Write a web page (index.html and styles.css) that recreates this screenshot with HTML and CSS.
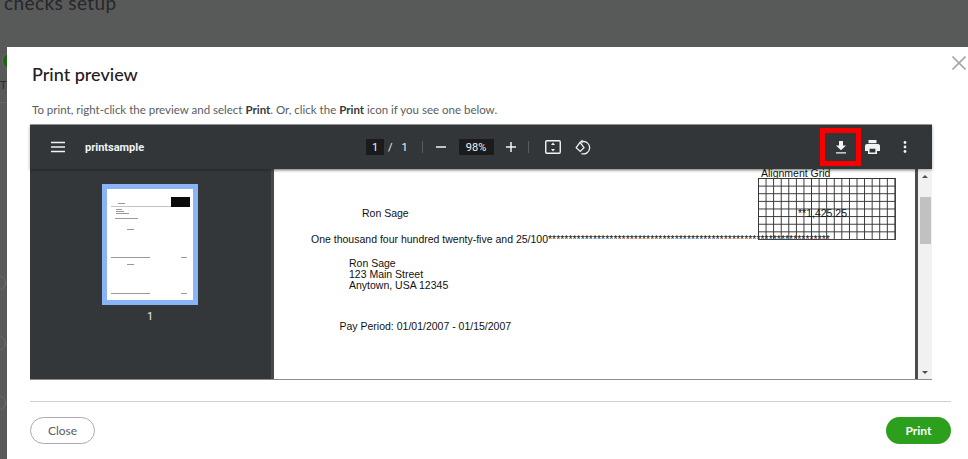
FILE: index.html
```html
<!DOCTYPE html>
<html lang="en">
<head>
<meta charset="utf-8">
<title>Print preview</title>
<link rel="stylesheet" href="styles.css">
</head>
<body>
<div class="backdrop">
  <h1 class="page-title">checks setup</h1>
  <div class="step-dot"></div>
  <div class="step-letter">T</div>
  <div class="page-rule"></div>
  <div class="ghost-pill"></div>
  <div class="ghost-pill"></div>
  <div class="ghost-pill"></div>
</div>

<section class="modal">
  <button class="modal-x" aria-label="Close">
    <svg width="14" height="14" viewBox="0 0 14 14"><path d="M.5 .5L13.500 13.500M13.500 .5L.5 13.500" stroke="#a6a6a6" stroke-width="1.6" fill="none"/></svg>
  </button>
  <h2 class="modal-title">Print preview</h2>
  <p class="modal-desc">To print, right-click the preview and select <b>Print</b>. Or, click the <b>Print</b> icon if you see one below.</p>

  <div class="viewer">
    <header class="toolbar">
      <div class="tb-left">
        <svg class="tb-menu" width="14" height="12" viewBox="0 0 14 12"><path d="M0 1.500H14M0 6H14M0 10.500H14" stroke="#f1f3f4" stroke-width="1.7"/></svg>
        <span class="doc-name">printsample</span>
      </div>
      <div class="tb-center">
        <span class="page-box">1</span>
        <span class="page-of">/</span>
        <span class="page-total">1</span>
        <span class="tb-sep"></span>
        <svg class="tb-minus" width="12" height="12" viewBox="0 0 12 12"><path d="M1 6H11" stroke="#f1f3f4" stroke-width="1.5"/></svg>
        <span class="zoom-box">98%</span>
        <svg class="tb-plus" width="12" height="12" viewBox="0 0 12 12"><path d="M1 6H11M6 1V11" stroke="#f1f3f4" stroke-width="1.5"/></svg>
        <span class="tb-sep tb-sep-2"></span>
        <svg class="tb-fit" width="16" height="14" viewBox="0 0 16 14"><rect x=".75" y=".75" width="14.500" height="12.500" rx="1.200" fill="none" stroke="#f1f3f4" stroke-width="1.400"/><path d="M8 2.600L10 5H6zM8 11.400L6 9h4z" fill="#f1f3f4"/></svg>
        <svg class="tb-rotate" width="16" height="16" viewBox="0 0 16 16"><path d="M5 3.400L1.200 8.600 5.200 12.400 9 8.600z" fill="none" stroke="#f1f3f4" stroke-width="1.300"/><path d="M7.400 2.600a6.200 6.200 0 1 1-.9 12" fill="none" stroke="#f1f3f4" stroke-width="1.300"/><path d="M7.600 .6V4.600L5 2.600z" fill="#f1f3f4"/></svg>
      </div>
      <div class="tb-right">
        <span class="dl-frame">
          <svg width="12" height="13" viewBox="0 0 12 13"><path d="M4 0H8V4.500H11L6 9.200 1 4.500H4zM1 11.200H11V12.600H1z" fill="#f1f3f4"/></svg>
        </span>
        <svg class="tb-print" width="15" height="14" viewBox="0 0 15 14"><path d="M3.500 0H11.500V3.200H3.500z" fill="#f1f3f4"/><path d="M2 4H13a2 2 0 0 1 2 2V11H12V14H3V11H0V6a2 2 0 0 1 2-2zM4.600 8.800V12.500H10.400V8.800z" fill="#f1f3f4" fill-rule="evenodd"/></svg>
        <svg class="tb-more" width="4" height="12" viewBox="0 0 4 12"><circle cx="2" cy="1.500" r="1.400" fill="#f1f3f4"/><circle cx="2" cy="6" r="1.400" fill="#f1f3f4"/><circle cx="2" cy="10.500" r="1.400" fill="#f1f3f4"/></svg>
      </div>
    </header>

    <div class="viewer-body">
      <aside class="thumbs">
        <div class="thumb">
          <div class="thumb-page">
            <span class="tl tl-a"></span>
            <span class="tl tl-b"></span>
            <span class="tl tl-c"></span>
            <span class="tl tl-d"></span>
            <span class="tl tl-e"></span>
            <span class="tl tl-f"></span>
            <span class="tl tl-g"></span>
            <span class="tl tl-h"></span>
            <span class="tl tl-i"></span>
            <span class="tl tl-j"></span>
            <span class="tl tl-k"></span>
            <span class="tl tl-l"></span>
            <span class="thumb-black"></span>
          </div>
        </div>
        <div class="thumb-num">1</div>
      </aside>
      <main class="doc">
        <div class="grid-label">Alignment Grid</div>
        <div class="grid"></div>
        <div class="amount">**1,425.25</div>
        <p class="doc-line payee">Ron Sage</p>
        <p class="doc-line words">One thousand four hundred twenty-five and 25/100*********************************************************************</p>
        <p class="doc-line address">Ron Sage<br>123 Main Street<br>Anytown, USA 12345</p>
        <p class="doc-line period">Pay Period: 01/01/2007 - 01/15/2007</p>
      </main>
      <div class="doc-edge"></div>
      <div class="scrollbar">
        <span class="arrow-up"></span>
        <span class="thumb-bar"></span>
        <span class="arrow-down"></span>
      </div>
    </div>
  </div>

  <footer class="modal-foot">
    <button class="btn btn-close">Close</button>
    <button class="btn btn-print">Print</button>
  </footer>
</section>
</body>
</html>
```
FILE: styles.css
```css
* { box-sizing: border-box; }
html, body { margin: 0; height: 100%; }
body {
  width: 968px;
  height: 459px;
  overflow: hidden;
  position: relative;
  background: #585959;
  font-family: "Lato", "Liberation Sans", sans-serif;
}

/* page dimmed behind the dialog */
.backdrop { height: 459px; overflow: hidden; color: #262729; }
.page-title {
  margin: -8px 0 0 4px;
  font: 400 19px/22px "Lato", sans-serif;
  letter-spacing: 0.4px;
  color: #262729;
}
.step-dot {
  width: 18px;
  height: 18px;
  margin: 38px 0 0 2px;
  border-radius: 50%;
  background: #1c6412;
  border: 1px solid #6a6b6b;
}
.step-letter { margin: 8px 0 0 0; font-size: 11px; line-height: 13px; color: #2c2d2e; }
.page-rule { height: 1px; margin-top: 11px; background: #646566; }
.ghost-pill {
  width: 16px;
  height: 16px;
  margin: 0 0 44px -10px;
  border: 1px solid #6c6d6d;
  border-radius: 50%;
}
.page-rule + .ghost-pill { margin-top: 172px; }

/* dialog */
.modal {
  position: absolute;
  left: 7px;
  top: 47px;
  width: 961px;
  height: 412px;
  padding: 16px 36px 0 25px;
  background: #fff;
}
.modal-x {
  position: absolute;
  top: 9px;
  right: 2px;
  width: 14px;
  height: 14px;
  padding: 0;
  border: 0;
  background: none;
  display: flex;
}
.modal-title {
  margin: 0;
  font: 500 18px/22px "Lato", sans-serif;
  color: #1f2023;
}
.modal-desc {
  margin: 17px 0 0 0;
  font-size: 11.5px;
  line-height: 16px;
  color: #5a5d62;
}
.modal-desc b { font-weight: 700; color: #393a3d; }

/* PDF viewer */
.viewer {
  width: 902px;
  height: 256px;
  margin: 6px 0 0 -2px;
  display: flex;
  flex-direction: column;
  background: #333639;
  border-top: 1px solid #9d9e9f;
  border-bottom: 1px solid #8b8d8e;
}
.toolbar {
  height: 44px;
  flex: none;
  display: flex;
  align-items: center;
  background: #323639;
  color: #f1f3f4;
  font-family: "Roboto", sans-serif;
  position: relative;
  z-index: 1;
  box-shadow: 0 1px 3px rgba(0,0,0,.35);
}
.tb-left { width: 336px; display: flex; align-items: center; padding-left: 21px; }
.doc-name { margin-left: 20px; font-size: 11px; font-weight: 700; }
.tb-center { display: flex; align-items: center; font-size: 11px; }
.page-box {
  width: 18px;
  height: 16px;
  display: flex;
  align-items: center;
  justify-content: center;
  background: #191b1c;
}
.page-of { margin-left: 4px; }
.page-total { margin-left: 9px; width: 6px; }
.tb-sep { width: 1px; height: 12px; margin-left: 14px; background: #5b5e61; }
.tb-minus { margin-left: 12px; }
.zoom-box {
  width: 35px;
  height: 16px;
  margin-left: 12px;
  display: flex;
  align-items: center;
  justify-content: center;
  background: #191b1c;
}
.tb-plus { margin-left: 11px; }
.tb-sep-2 { margin-left: 11px; }
.tb-fit { margin-left: 16px; }
.tb-rotate { margin-left: 14px; }
.tb-right { margin-left: auto; display: flex; align-items: center; padding-right: 25px; }
.dl-frame {
  width: 41px;
  height: 38px;
  display: flex;
  align-items: center;
  justify-content: center;
  border: 5px solid #f70000;
}
.tb-print { margin-left: 4px; }
.tb-more { margin-left: 23px; }

.viewer-body { flex: 1; min-height: 0; display: flex; }
.thumbs {
  width: 244px;
  flex: none;
  background: #33373a;
  padding-top: 15px;
  border-right: 3px solid #474b4e;
}
.thumb {
  width: 96px;
  height: 121px;
  margin: 0 0 0 72px;
  padding: 5px;
  background: #8ab4f8;
}
.thumb-page { width: 86px; height: 111px; background: #fff; position: relative; }
.tl { position: absolute; height: 1px; background: #999; filter: blur(.4px); }
.tl-a { left: 11px; top: 14px; width: 7px; }
.tl-b { left: 4px; top: 17px; width: 60px; background: #c4c4c4; }
.tl-c { left: 9px; top: 20px; width: 6px; }
.tl-d { left: 9px; top: 22px; width: 8px; }
.tl-e { left: 9px; top: 24px; width: 13px; }
.tl-f { left: 8px; top: 29px; width: 23px; }
.tl-g { left: 20px; top: 40px; width: 7px; }
.tl-h { left: 4px; top: 68px; width: 39px; }
.tl-i { left: 74px; top: 68px; width: 6px; }
.tl-j { left: 20px; top: 75px; width: 7px; }
.tl-k { left: 4px; top: 104px; width: 39px; }
.tl-l { left: 74px; top: 104px; width: 6px; }
.thumb-black { position: absolute; left: 64px; top: 8px; width: 19px; height: 10px; background: #0b0b0b; }
.thumb-num { margin: 5px 0 0 72px; width: 96px; text-align: center; font: 11px/14px "Roboto", sans-serif; color: #e8eaed; }

.doc {
  width: 641px;
  flex: none;
  position: relative;
  overflow: hidden;
  background: #fff;
  color: #111;
  font-family: "Liberation Sans", sans-serif;
  font-size: 10.5px;
  line-height: 11px;
  box-shadow: inset 0 3px 3px -2px rgba(0,0,0,.3);
}
.doc-line { margin: 0; white-space: nowrap; }
.payee { margin: 39px 0 0 88px; }
.words { margin: 15px 0 0 37px; }
.address { margin: 13px 0 0 75px; }
.period { margin: 30px 0 0 65.500px; }
.grid-label { position: absolute; left: 487px; top: 0; line-height: 9px; }
.amount { position: absolute; left: 524px; top: 39px; }
.grid {
  position: absolute;
  left: 484px;
  top: 9px;
  width: 137.500px;
  height: 62px;
  border-right: 1px solid #444;
  border-bottom: 1px solid #444;
  background-image:
    linear-gradient(to right, #333 1px, transparent 1px),
    linear-gradient(to bottom, #333 1px, transparent 1px);
  background-size: 7.580px 7.640px;
}
.doc-edge { width: 3px; flex: none; background: #4a4d4f; }
.scrollbar {
  flex: 1;
  background: #f1f1f1;
  display: flex;
  flex-direction: column;
  align-items: center;
  position: relative;
}
.arrow-up {
  margin-top: 6px;
  border-left: 3px solid transparent;
  border-right: 3px solid transparent;
  border-bottom: 3px solid #505050;
}
.thumb-bar { width: 11px; height: 47px; margin-top: 19px; background: #c1c1c1; }
.arrow-down {
  margin-top: auto;
  margin-bottom: 5px;
  border-left: 3px solid transparent;
  border-right: 3px solid transparent;
  border-top: 3px solid #505050;
}

/* footer */
.modal-foot {
  width: 921px;
  margin: 21px 0 0 -2px;
  padding-top: 15px;
  display: flex;
  justify-content: space-between;
  border-top: 1px solid #cfd0d1;
}
.btn {
  width: 65px;
  height: 27px;
  padding: 0;
  border-radius: 14px;
  font: 12px "Lato", sans-serif;
}
.btn-close { background: #fff; border: 1px solid #a9abad; color: #5a5d62; }
.btn-print { background: #2ca01c; border: 0; color: #fff; font-weight: 700; }
```
